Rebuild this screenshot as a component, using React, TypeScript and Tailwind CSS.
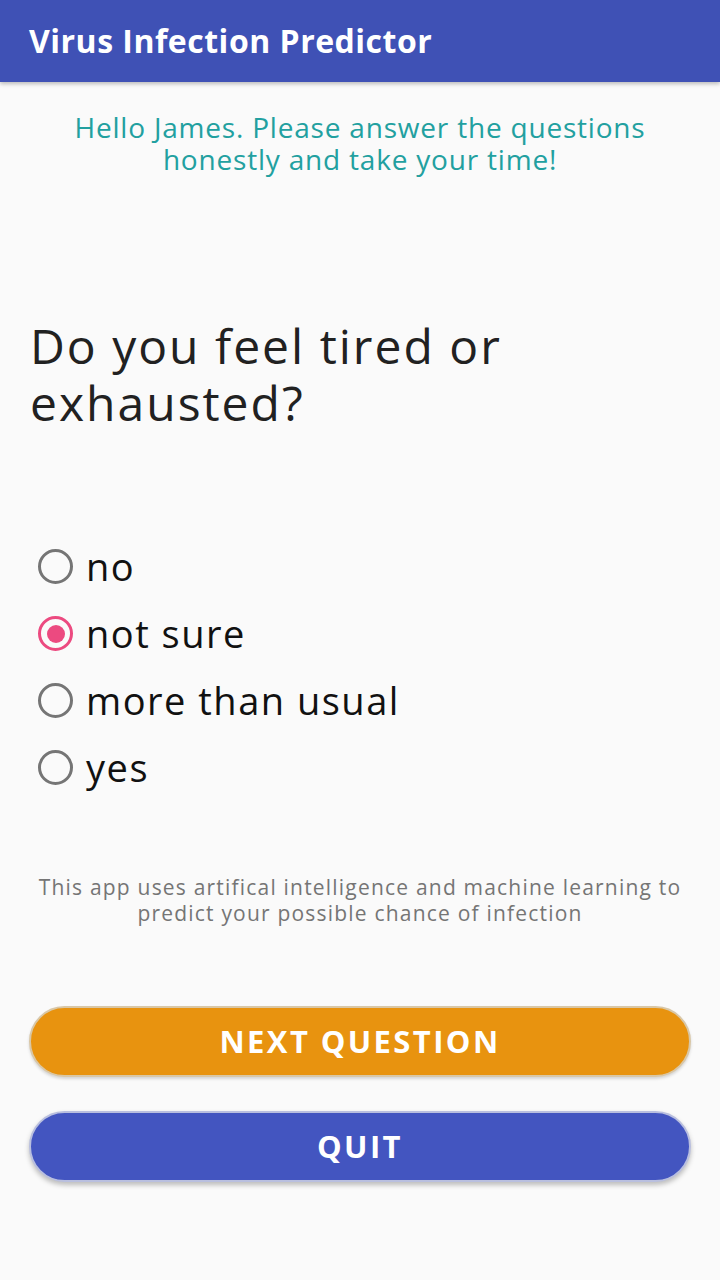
import { useState } from 'react'

const OPTIONS = ['no', 'not sure', 'more than usual', 'yes']

export default function App() {
  const [selected, setSelected] = useState(1)

  return (
    <div className="w-[720px] h-[1280px] bg-[#fafafa] flex flex-col font-['Open_Sans',sans-serif]">
      {/* App bar */}
      <div className="h-[82px] bg-[#3f51b5] flex items-center px-[29px] shadow-[0_2px_4px_rgba(0,0,0,0.25)] z-10">
        <h1 className="text-white text-[32px] font-bold tracking-[0.5px]">Virus Infection Predictor</h1>
      </div>

      <p className="mt-[29px] px-[50px] text-center text-[#22a0a0] text-[28px] leading-[32px] tracking-[0.8px]">
        Hello James. Please answer the questions honestly and take your time!
      </p>

      {/* Question */}
      <h2 className="mt-[142px] pl-[30px] pr-[180px] text-[#212121] text-[48px] leading-[57px] tracking-[2px]">
        Do you feel tired or exhausted?
      </h2>

      {/* Answers */}
      <div className="mt-[102px] flex flex-col px-[38px]">
        {OPTIONS.map((option, idx) => (
          <button
            key={option}
            onClick={() => setSelected(idx)}
            className="h-[67px] flex items-center gap-[13px] text-left"
          >
            <span
              className={`w-[35px] h-[35px] rounded-full border-[3px] flex items-center justify-center ${
                selected === idx ? 'border-[#ec4a80]' : 'border-[#757575]'
              }`}
            >
              {selected === idx && <span className="w-[18px] h-[18px] rounded-full bg-[#ec4a80]" />}
            </span>
            <span className="text-[38px] text-[#111] leading-none pb-[2px] tracking-[1.5px]">{option}</span>
          </button>
        ))}
      </div>

      <p className="mt-[73px] px-[30px] text-center text-[#757575] text-[21px] leading-[26px] tracking-[1.2px]">
        This app uses artifical intelligence and machine learning to predict your possible chance of infection
      </p>

      {/* Buttons */}
      <div className="mt-[80px] px-[29px] flex flex-col gap-[34px]">
        <button className="h-[71px] rounded-full bg-[#e8930f] border-2 border-[#d9c7a6] text-white text-[31px] font-bold tracking-[2.4px] shadow-[0_2px_3px_rgba(0,0,0,0.15)]">
          NEXT QUESTION
        </button>
        <button className="h-[71px] rounded-full bg-[#4355c0] border-2 border-[#b9bfdf] text-white text-[31px] font-bold tracking-[2.4px] shadow-[0_3px_5px_rgba(0,0,0,0.25)]">
          QUIT
        </button>
      </div>
    </div>
  )
}
